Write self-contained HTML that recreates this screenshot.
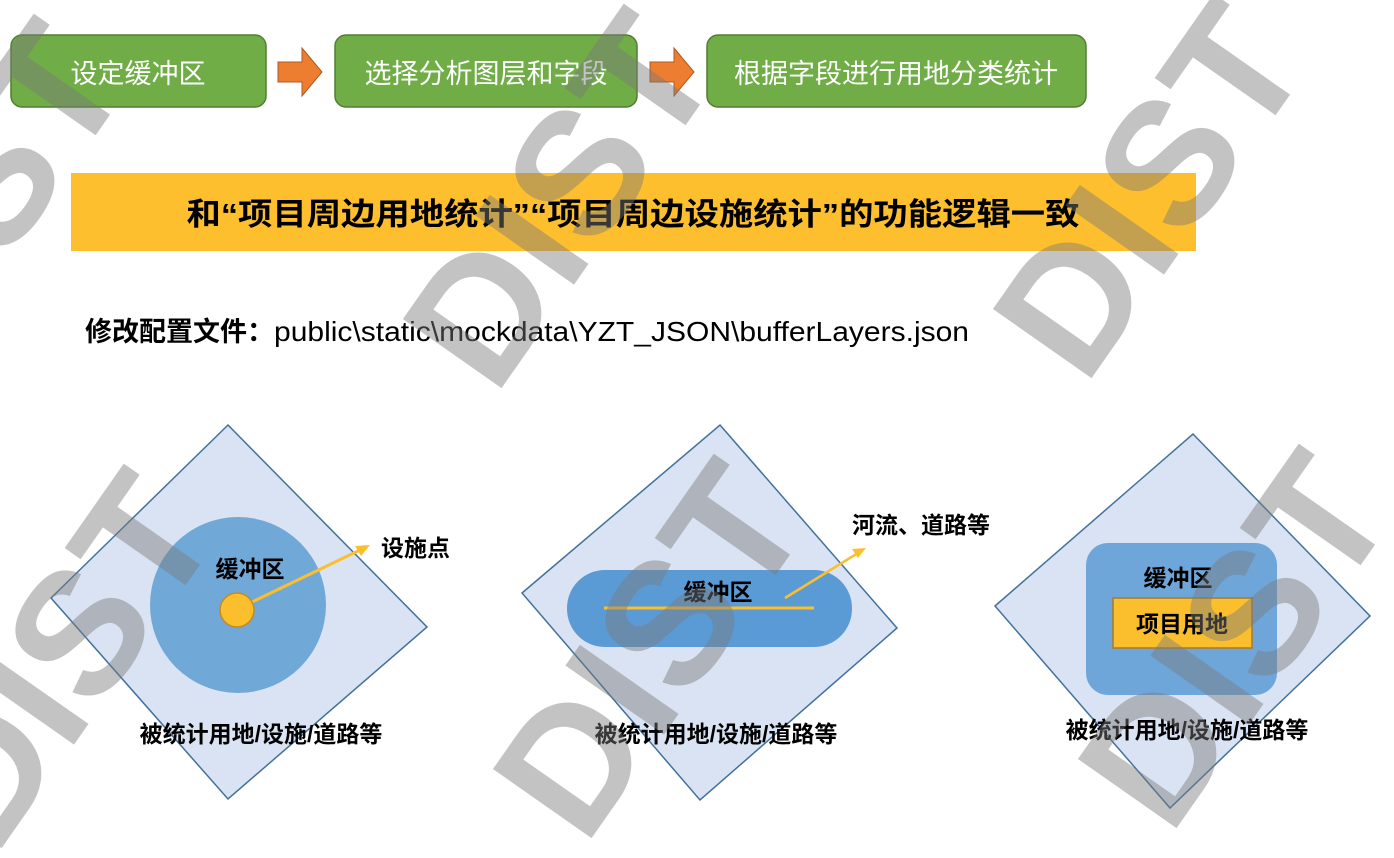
<!DOCTYPE html>
<html><head><meta charset="utf-8"><style>
body{margin:0;width:1394px;height:858px;overflow:hidden;background:#fff;font-family:"Liberation Sans","Noto Sans CJK SC",sans-serif;}
svg{position:absolute;left:0;top:0}
</style></head><body>
<svg width="1394" height="858" viewBox="0 0 1394 858" font-family="Liberation Sans, Noto Sans CJK SC, sans-serif">
<rect x="11" y="35" width="255" height="72" rx="11" fill="#70ad47" stroke="#507e32" stroke-width="1.5"/>
<rect x="335" y="35" width="302" height="72" rx="11" fill="#70ad47" stroke="#507e32" stroke-width="1.5"/>
<rect x="707" y="35" width="379" height="72" rx="11" fill="#70ad47" stroke="#507e32" stroke-width="1.5"/>
<text x="138" y="83" font-size="27" fill="#fff" text-anchor="middle">设定缓冲区</text>
<text x="486" y="83" font-size="27" fill="#fff" text-anchor="middle">选择分析图层和字段</text>
<text x="896" y="83" font-size="27" fill="#fff" text-anchor="middle">根据字段进行用地分类统计</text>
<polygon points="278,62 302,62 302,48 322,72 302,96 302,82 278,82" fill="#ed7d31" stroke="#ae5a21"/>
<polygon points="650,62 674,62 674,48 694,72 674,96 674,82 650,82" fill="#ed7d31" stroke="#ae5a21"/>
<rect x="71" y="173" width="1125" height="78" fill="#fdbf2d"/>
<text x="633" y="225" font-size="31" font-weight="bold" fill="#000" text-anchor="middle" textLength="893" lengthAdjust="spacingAndGlyphs">和“项目周边用地统计”“项目周边设施统计”的功能逻辑一致</text>
<text x="85" y="341" font-size="27" fill="#000"><tspan font-weight="bold">修改配置文件：</tspan><tspan font-size="28" textLength="695" lengthAdjust="spacingAndGlyphs">public\static\mockdata\YZT_JSON\bufferLayers.json</tspan></text>
<!-- diagram 1 -->
<polygon points="228,425 427,627 228,799 51,598" fill="#dae3f3" stroke="#41719c" stroke-width="1.5"/>
<circle cx="238" cy="605" r="88" fill="#70a8d8"/>
<text x="250" y="577" font-size="23" font-weight="bold" text-anchor="middle">缓冲区</text>
<line x1="250" y1="603" x2="360" y2="550" stroke="#fbbf2d" stroke-width="3"/>
<polygon points="370,545 355,546 361,556" fill="#fbbf2d"/>
<circle cx="237" cy="610" r="17" fill="#fbbf2d" stroke="#c68b1c" stroke-width="1.5"/>
<text x="381" y="556" font-size="23" font-weight="bold">设施点</text>
<text x="261" y="742" font-size="23" font-weight="bold" text-anchor="middle">被统计用地/设施/道路等</text>
<!-- diagram 2 -->
<polygon points="720,425 897,628 700,800 522,593" fill="#dae3f3" stroke="#41719c" stroke-width="1.5"/>
<rect x="567" y="570" width="285" height="77" rx="38" fill="#5b9bd5"/>
<line x1="604" y1="608" x2="814" y2="608" stroke="#fbbf2d" stroke-width="3"/>
<line x1="785" y1="598" x2="858" y2="553" stroke="#fbbf2d" stroke-width="2.5"/>
<polygon points="866,548 852,549 858,558" fill="#fbbf2d"/>
<text x="718" y="600" font-size="23" font-weight="bold" text-anchor="middle">缓冲区</text>
<text x="852" y="533" font-size="23" font-weight="bold">河流、道路等</text>
<text x="716" y="742" font-size="23" font-weight="bold" text-anchor="middle">被统计用地/设施/道路等</text>
<!-- diagram 3 -->
<polygon points="1193,434 1370,616 1170,808 995,606" fill="#dae3f3" stroke="#41719c" stroke-width="1.5"/>
<rect x="1086" y="543" width="191" height="152" rx="22" fill="#5b9bd5" opacity="0.85"/>
<text x="1178" y="586" font-size="23" font-weight="bold" text-anchor="middle">缓冲区</text>
<rect x="1113" y="598" width="139" height="50" fill="#fbbf2d" stroke="#a87a28" stroke-width="1.5"/>
<text x="1182" y="632" font-size="23" font-weight="bold" text-anchor="middle">项目用地</text>
<text x="1187" y="738" font-size="23" font-weight="bold" text-anchor="middle">被统计用地/设施/道路等</text>
<g font-size="175" font-weight="bold" fill="#7a7a7a" fill-opacity="0.45" text-anchor="middle">
<text transform="translate(560,200) rotate(-55)" dy="60">DIST</text>
<text transform="translate(1150,190) rotate(-55)" dy="60">DIST</text>
<text transform="translate(650,650) rotate(-55)" dy="60">DIST</text>
<text transform="translate(1235,640) rotate(-55)" dy="60">DIST</text>
<text transform="translate(-30,210) rotate(-55)" dy="60">DIST</text>
<text transform="translate(60,660) rotate(-55)" dy="60">DIST</text>
</g>
</svg>
</body></html>
